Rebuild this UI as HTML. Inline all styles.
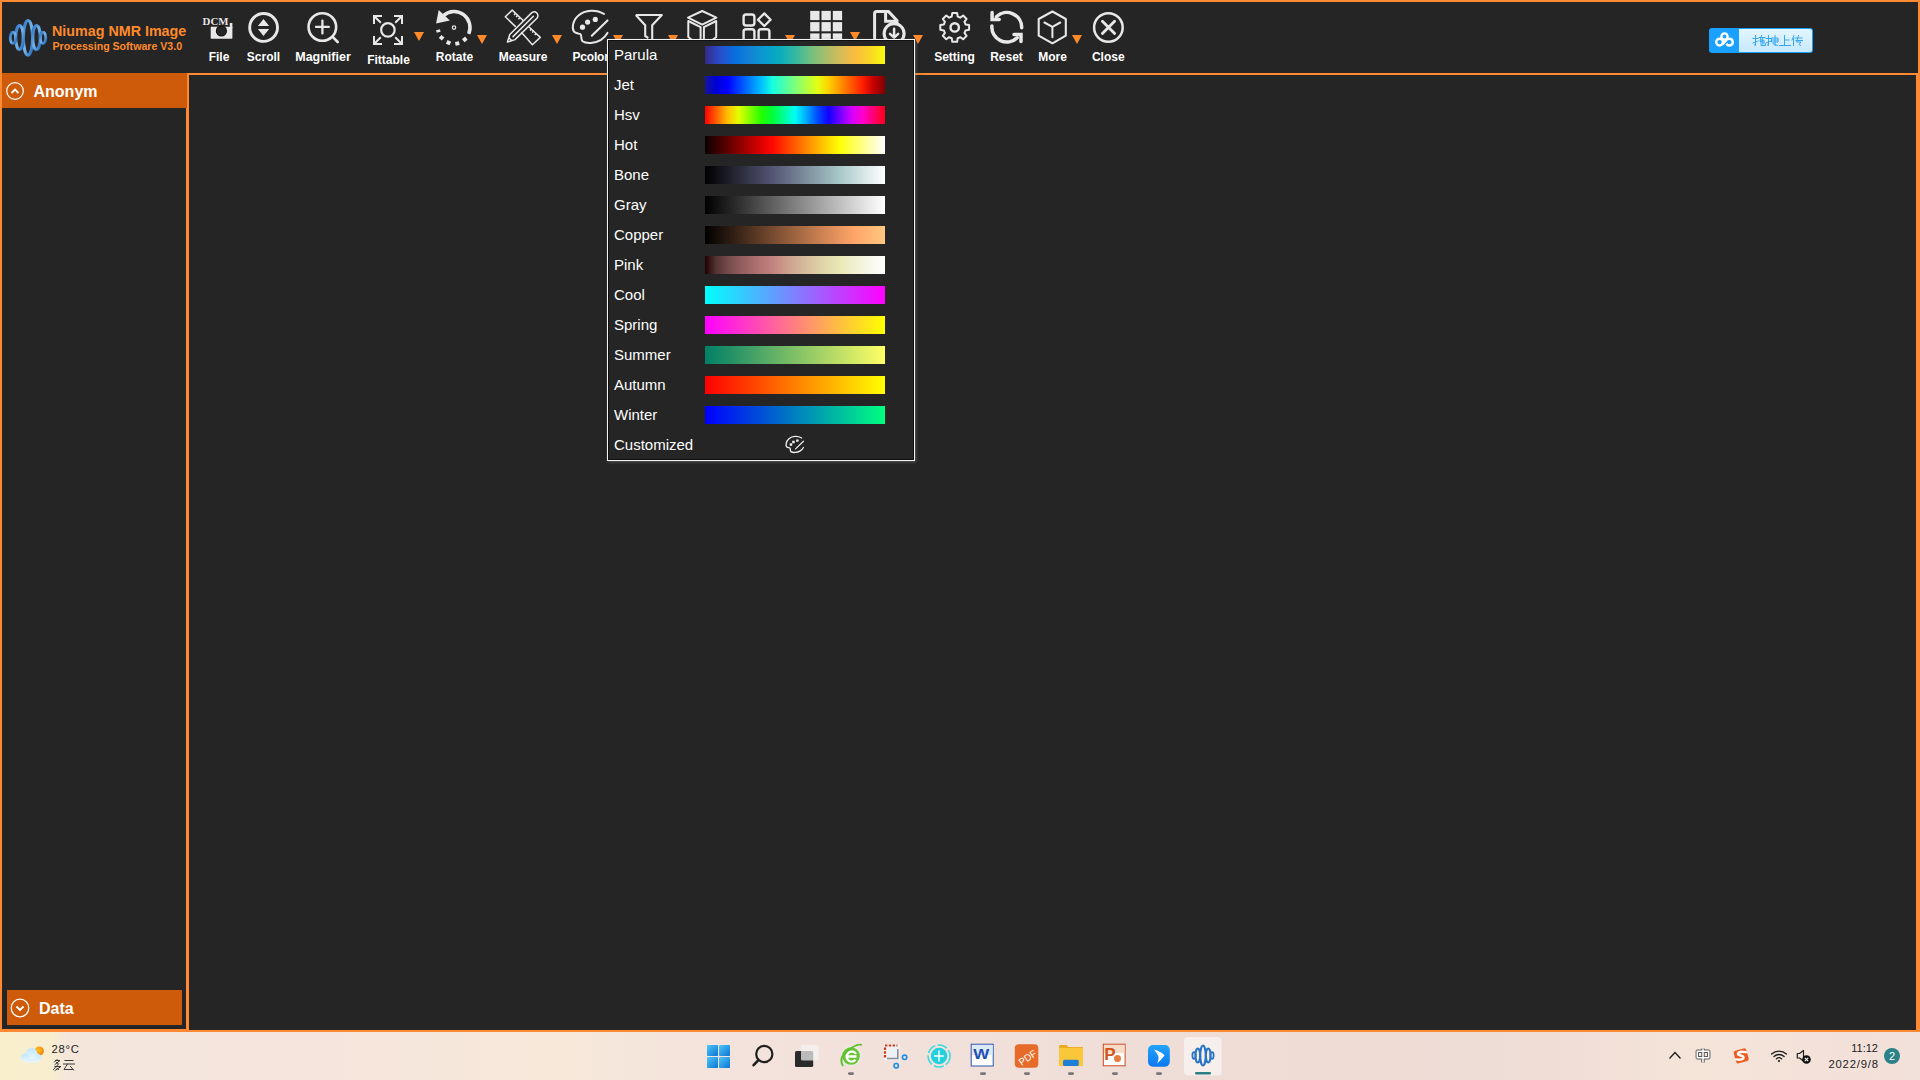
<!DOCTYPE html>
<html><head><meta charset="utf-8">
<style>
*{margin:0;padding:0;box-sizing:border-box}
html,body{width:1920px;height:1080px;overflow:hidden;background:#252525;font-family:"Liberation Sans",sans-serif}
.a{position:absolute}
.or{background:#ff8a33}
.lbl{position:absolute;color:#fff;font-weight:bold;font-size:12px;line-height:14px;white-space:nowrap;transform:translateX(-50%)}
.tri{position:absolute;width:0;height:0;border-left:5px solid transparent;border-right:5px solid transparent;border-top:9px solid #ff8a2a}
.mi{position:absolute;left:614px;color:#fff;font-size:15px;line-height:17px;white-space:nowrap}
.bar{position:absolute;left:705px;width:180px;height:18px}
.cm-parula{background:linear-gradient(to right,#352a87,#294dca,#066fdf,#1484d4,#079ccf,#0badbc,#33b8a1,#6ebf82,#a5be6b,#d3bb58,#fbbc41,#f8d727,#f9fb0e)}
.cm-jet{background:linear-gradient(to right,#16169c,#0000d8,#0000ff,#0040ff,#0080ff,#00c0ff,#16ffe1,#49ffad,#7dff7a,#b1ff46,#e4ff13,#ffd000,#ff9400,#ff5900,#ff1e00,#c40000,#800000)}
.cm-hsv{background:linear-gradient(to right,#ff0000,#ff5f00,#ffbd00,#e2ff00,#84ff00,#25ff00,#00ff39,#00ff97,#00fff6,#00aaff,#004bff,#1300ff,#7200ff,#d000ff,#ff00cf,#ff0071,#ff0018)}
.cm-hot{background:linear-gradient(to right,#0b0000,#350000,#5f0000,#890000,#b30000,#dd0000,#ff0800,#ff3200,#ff5c00,#ff8600,#ffb000,#ffda00,#ffff07,#ffff46,#ffff85,#ffffc4,#ffffff)}
.cm-bone{background:linear-gradient(to right,#000000,#0e0e13,#1c1c27,#2a2a3a,#38384e,#464661,#545574,#626882,#707b90,#7e8f9e,#8ca2ac,#9ab5ba,#a9c8c8,#bfd6d6,#d5e4e4,#eaf2f2,#ffffff)}
.cm-gray{background:linear-gradient(to right,#000000,#2a2a2a,#555555,#808080,#aaaaaa,#d5d5d5,#ffffff)}
.cm-copper{background:linear-gradient(to right,#000000,#342115,#69422a,#9e6440,#d28555,#ffa66a,#ffc77f)}
.cm-pink{background:linear-gradient(to right,#1e0000,#553434,#744a4a,#8d5a5a,#a16868,#b47575,#c38280,#ca988a,#d0ac94,#d7bd9c,#ddcda5,#e3dcad,#e9e9b6,#efefcb,#f4f4de,#fafaf0,#ffffff)}
.cm-cool{background:linear-gradient(to right,#00ffff,#2ad5ff,#55aaff,#807fff,#aa55ff,#d52aff,#ff00ff)}
.cm-spring{background:linear-gradient(to right,#ff00ff,#ff2ad5,#ff55aa,#ff807f,#ffaa55,#ffd52a,#ffff00)}
.cm-summer{background:linear-gradient(to right,#008066,#2a9466,#55aa66,#80c066,#aad466,#d5ea66,#ffff66)}
.cm-autumn{background:linear-gradient(to right,#ff0000,#ff2a00,#ff5500,#ff8000,#ffaa00,#ffd500,#ffff00)}
.cm-winter{background:linear-gradient(to right,#0000ff,#002aea,#0055d4,#0080bf,#00aaaa,#00d594,#00ff80)}
</style></head><body>
<!-- window frame -->
<div class="a" style="left:0;top:0;width:1920px;height:1032px;background:#ff8a33"></div>
<div class="a" style="left:2px;top:2px;width:1916px;height:71px;background:#252525"></div>
<div class="a" style="left:2px;top:73px;width:184px;height:956px;background:#252525"></div>
<div class="a" style="left:189px;top:75px;width:1727px;height:955px;background:#252525"></div>
<!-- toolbar icons -->
<svg class="a" style="left:0;top:0" width="1200" height="75" viewBox="0 0 1200 75">
 <defs>
  <linearGradient id="lg1" x1="0" y1="0" x2="1" y2="1"><stop offset="0" stop-color="#2a72c8"/><stop offset="0.5" stop-color="#74b2e8"/><stop offset="1" stop-color="#2068bc"/></linearGradient>
 </defs>
 <!-- logo -->
 <g fill="none" stroke="url(#lg1)">
  <ellipse cx="28" cy="37.8" rx="4.7" ry="17.3" stroke-width="3.2"/>
  <ellipse cx="19.5" cy="37.5" rx="3.9" ry="11.9" stroke-width="3.2"/>
  <ellipse cx="36.5" cy="37.5" rx="3.9" ry="11.9" stroke-width="3.2"/>
  <ellipse cx="13" cy="37.8" rx="2.8" ry="5.6" stroke-width="2.8"/>
  <ellipse cx="43" cy="37.8" rx="2.8" ry="5.6" stroke-width="2.8"/>
 </g>
 <g fill="#e8e8e8" stroke="none">
  <!-- File: camera -->
  <rect x="210.7" y="26.7" width="21.7" height="12.1" rx="0.8"/>
  <rect x="229.8" y="23" width="2.6" height="5"/>
  <circle cx="221.4" cy="31" r="5.6" fill="#111"/>
  <circle cx="221.4" cy="31" r="4.6" fill="#252525"/>
 </g>
 <text x="202.6" y="25" font-family="Liberation Serif" font-weight="bold" font-size="10.8" fill="#e8e8e8" stroke="#111" stroke-width="0.6" paint-order="stroke" textLength="26" lengthAdjust="spacingAndGlyphs">DCM</text>
 <g fill="none" stroke="#e8e8e8" stroke-linecap="round" stroke-linejoin="round">
  <!-- Scroll -->
  <circle cx="263.6" cy="27.45" r="13.9" stroke-width="2.9"/>
  <!-- Magnifier -->
  <circle cx="322.35" cy="27" r="13.8" stroke-width="2.6"/>
  <path d="M322.4,20.6V33.4M316,26.9H328.8" stroke-width="2.3"/>
  <path d="M332.9,37.1L337.7,42" stroke-width="2.6"/>
  <!-- Fittable -->
  <circle cx="387.9" cy="29.9" r="6.75" stroke-width="2.2"/>
  <path d="M374,24V16H382M374,16L380.8,22.8 M402,24V16H394M402,16L395.2,22.8 M374,36V44H382M374,44L380.8,37.2 M402,36V44H394M402,44L395.2,37.2" stroke-width="2" stroke-linecap="butt" stroke-linejoin="miter"/>
  <!-- Rotate arc -->
  <path d="M443.7,15.3 A16,16 0 0 1 468.7,33.9" stroke-width="3.5" stroke-linecap="butt"/>
  <circle cx="454" cy="27.6" r="1.7" stroke-width="1.2"/>
  <!-- Measure -->
  <g stroke-width="1.5">
   <path d="M523.2,20.5 L512.2,10.1 L505.3,16.8 L515.3,26.4"/>
   <path d="M529.3,27.2 L540.3,37.4 L532.4,44.7 L521.6,32.5"/>
   <path d="M515.57,13.37 l-1.53,1.58 M517.65,15.39 l-1.53,1.58 M519.94,17.62 l-1.53,1.58 M531.56,28.89 l-1.53,1.58 M533.71,30.98 l-1.53,1.58 M536.22,33.42 l-1.53,1.58" stroke-linecap="butt"/>
   <path d="M509.8,34.5 L531.6,12.9 Q534.5,10.6 536.8,13 Q539,15.6 536.9,18.2 L515,39.6 L507.4,42.1 Z"/>
   <path d="M513,36.6 L533.4,16.2"/>
   <path d="M509.3,38.3 L511.4,40.4"/>
  </g>
  <!-- Palette -->
  <path d="M603.9,13.9 C597,9.5 585,9.3 578.5,15.5 C572,21 572,29 574,31.6 C575.5,33.5 578.5,33.2 580.5,34.2 C582,35.5 580.5,39.5 582.5,41.3 C586,43.8 595,43.6 601,39.8 C604,37.8 606,35.5 607.5,32.9" stroke-width="2"/>
  <path d="M591.8,35.7 L607.5,20.4" stroke-width="2.1"/>
  <!-- Filter -->
  <path d="M635.8,15 H661.8 L652.2,25.3 V40 M635.8,15 L645.2,25.3 V36 L648.3,38" stroke-width="2.1" stroke-linecap="butt"/>
  <!-- Cube -->
  <path d="M702.2,11 L716.4,17.6 L702.2,24.6 L688,17.6 Z" stroke-width="2" stroke-linejoin="round"/>
  <path d="M688.3,21 V37 L692,40 M688.3,21 L700.6,27.2 V40" stroke-width="2"/>
  <path d="M716.2,21 V37 L712.5,40 M716.2,21 L703.9,27.2 V40" stroke-width="2"/>
  <!-- Apps -->
  <rect x="743.6" y="14.5" width="10.8" height="11" rx="2.5" stroke-width="2.4"/>
  <path d="M764.3,13.4 L770.6,19.7 L764.3,26 L758,19.7 Z" stroke-width="2.3"/>
  <path d="M743.6,41 V31.5 Q743.6,29.2 746,29.2 H752 Q754.4,29.2 754.4,31.5 V41" stroke-width="2.4"/>
  <path d="M758.6,41 V31.5 Q758.6,29.2 761,29.2 H767 Q769.4,29.2 769.4,31.5 V41" stroke-width="2.4"/>
  <!-- Export -->
  <path d="M874.6,40 V13.6 Q874.6,11.6 876.6,11.6 H888.6 L897,20.5 V22.5" stroke-width="3"/>
  <path d="M885.6,12.5 V21.2 H896" stroke-width="3" stroke-linejoin="miter"/>
  <circle cx="894.1" cy="33.6" r="10" stroke-width="3.1"/>
  <path d="M894.1,28.8V37.4 M890,33.8 L894.1,37.6 L898.2,33.8" stroke-width="2.5"/>
  <!-- Gear -->
  <path d="M950.41,17.05 L951.71,16.61 L952.29,13.00 L957.11,13.00 L957.69,16.61 L958.99,17.05 L960.22,17.65 L963.18,15.51 L966.59,18.92 L964.45,21.88 L965.05,23.11 L965.49,24.41 L969.10,24.99 L969.10,29.81 L965.49,30.39 L965.05,31.69 L964.45,32.92 L966.59,35.88 L963.18,39.29 L960.22,37.15 L958.99,37.75 L957.69,38.19 L957.11,41.80 L952.29,41.80 L951.71,38.19 L950.41,37.75 L949.18,37.15 L946.22,39.29 L942.81,35.88 L944.95,32.92 L944.35,31.69 L943.91,30.39 L940.30,29.81 L940.30,24.99 L943.91,24.41 L944.35,23.11 L944.95,21.88 L942.81,18.92 L946.22,15.51 L949.18,17.65Z" stroke-width="2"/>
  <circle cx="954.7" cy="27.4" r="4.2" stroke-width="2.4"/>
  <!-- Reset -->
  <path d="M996.5,16.7 A14.9,14.9 0 0 1 1021.7,27.8" stroke-width="3.5"/>
  <path d="M992.1,12.6 V19.4 H999.2" stroke-width="3.5" stroke-linecap="round" stroke-linejoin="miter"/>
  <path d="M991.9,26 A14.9,14.9 0 0 0 1017.2,37.8" stroke-width="3.5"/>
  <path d="M1014,34.5 H1021 V41.5" stroke-width="3.5" stroke-linecap="round" stroke-linejoin="miter"/>
  <!-- More hexagon -->
  <path d="M1052.4,11.5 L1065.8,19 V35.7 L1052.4,43.3 L1038.7,35.7 V19 Z" stroke-width="2.1"/>
  <path d="M1044.4,22.5 L1052.4,26.8 L1060.3,22.5 M1052.4,26.8 V37.2" stroke-width="2"/>
  <!-- Close -->
  <circle cx="1108.4" cy="27.45" r="14.3" stroke-width="2.5"/>
  <path d="M1102.4,21.2 L1114.6,33.6 M1114.6,21.2 L1102.4,33.6" stroke-width="2.8"/>
 </g>
 <g fill="#e8e8e8">
  <!-- scroll triangles -->
  <path d="M263.5,18.9 L269.2,26 H257.9Z M257.9,28.9 H269.2 L263.5,36Z"/>
  <!-- rotate arrowhead -->
  <path d="M436.1,23.6 L438.7,9.9 L449.9,20.5Z"/>
  <!-- rotate dashes -->
  <rect x="436.3" y="29.8" width="4" height="2.6" transform="rotate(-15 438.3 31)"/>
  <rect x="439.6" y="35.8" width="4" height="4" transform="rotate(40 441.6 37.8)"/>
  <rect x="446.5" y="40.7" width="4" height="4" transform="rotate(25 448.5 42.7)"/>
  <rect x="455.3" y="41.5" width="4" height="4" transform="rotate(-10 457.3 43.5)"/>
  <rect x="462.8" y="37.4" width="4" height="4" transform="rotate(-40 464.8 39.4)"/>
  <!-- palette dots -->
  <circle cx="582.5" cy="27.2" r="2.6"/><circle cx="587.6" cy="22.1" r="2.6"/><circle cx="595.3" cy="19.4" r="2.6"/>
  <!-- grid -->
  <rect x="810.2" y="10.9" width="9.3" height="9.2"/><rect x="821.5" y="10.9" width="9.3" height="9.2"/><rect x="832.8" y="10.9" width="9.3" height="9.2"/>
  <rect x="810.2" y="22.1" width="9.3" height="9.2"/><rect x="821.5" y="22.1" width="9.3" height="9.2"/><rect x="832.8" y="22.1" width="9.3" height="9.2"/>
  <rect x="810.2" y="33.4" width="9.3" height="7"/><rect x="821.5" y="33.4" width="9.3" height="7"/><rect x="832.8" y="33.4" width="9.3" height="7"/>
 </g>
</svg>
<div class="a" style="left:52px;top:23px;color:#ff8a2a;font-weight:bold;font-size:14.3px;line-height:17px;white-space:nowrap">Niumag NMR Image</div>
<div class="a" style="left:52.5px;top:40px;color:#ff8a2a;font-weight:bold;font-size:10.6px;line-height:13px;white-space:nowrap">Processing Software V3.0</div>

<!-- labels -->
<div class="lbl" style="left:219px;top:50px">File</div>
<div class="lbl" style="left:263.5px;top:50px">Scroll</div>
<div class="lbl" style="left:323px;top:50px;font-size:12.5px">Magnifier</div>
<div class="lbl" style="left:388.5px;top:53px">Fittable</div>
<div class="lbl" style="left:454.5px;top:50px">Rotate</div>
<div class="lbl" style="left:523px;top:50px">Measure</div>
<div class="a" style="left:572.5px;top:50px;color:#fff;font-weight:bold;font-size:12px;line-height:14px;letter-spacing:-0.2px;white-space:nowrap">Pcolor</div>
<div class="lbl" style="left:954.5px;top:50px">Setting</div>
<div class="lbl" style="left:1006.5px;top:50px">Reset</div>
<div class="lbl" style="left:1052.5px;top:50px">More</div>
<div class="lbl" style="left:1108.3px;top:50px">Close</div>

<!-- triangles -->
<div class="tri" style="left:414px;top:32px"></div>
<div class="tri" style="left:477px;top:35px"></div>
<div class="tri" style="left:552px;top:35px"></div>
<div class="tri" style="left:613px;top:35px"></div>
<div class="tri" style="left:668px;top:35px"></div>
<div class="tri" style="left:785px;top:35px"></div>
<div class="tri" style="left:850px;top:32px"></div>
<div class="tri" style="left:913px;top:35px"></div>
<div class="tri" style="left:1072px;top:35px"></div>

<!-- left panel -->
<div class="a" style="left:2px;top:73px;width:185px;height:35px;background:#ce5b0a"></div>
<svg class="a" style="left:0;top:73px" width="30" height="36">
 <circle cx="15" cy="18" r="8.3" fill="none" stroke="#fff" stroke-width="1.2"/>
 <polyline points="11.5,20 15,16.5 18.5,20" fill="none" stroke="#fff" stroke-width="1.8"/>
</svg>
<div class="a" style="left:33.5px;top:82px;color:#fff;font-weight:bold;font-size:16px;line-height:19px">Anonym</div>

<div class="a" style="left:7px;top:990px;width:175px;height:35px;background:#ce5b0a"></div>
<svg class="a" style="left:5px;top:990px" width="30" height="36">
 <circle cx="15" cy="18" r="8.8" fill="none" stroke="#fff" stroke-width="1.2"/>
 <polyline points="11.5,16.5 15,20 18.5,16.5" fill="none" stroke="#fff" stroke-width="1.8"/>
</svg>
<div class="a" style="left:39px;top:999px;color:#fff;font-weight:bold;font-size:16px;line-height:19px">Data</div>

<!-- menu -->
<div class="a" style="left:607px;top:39px;width:308px;height:422px;background:#252525;border:1px solid #f4f4f4;box-shadow:1px 1px 3px 0 rgba(120,120,120,0.6)">
 <div class="a" style="left:0;top:0;right:0;bottom:0;border:1px solid #101010"></div>
</div>
<div class="mi" style="top:46px">Parula</div><div class="bar cm-parula" style="top:46px"></div>
<div class="mi" style="top:76px">Jet</div><div class="bar cm-jet" style="top:76px"></div>
<div class="mi" style="top:106px">Hsv</div><div class="bar cm-hsv" style="top:106px"></div>
<div class="mi" style="top:136px">Hot</div><div class="bar cm-hot" style="top:136px"></div>
<div class="mi" style="top:166px">Bone</div><div class="bar cm-bone" style="top:166px"></div>
<div class="mi" style="top:196px">Gray</div><div class="bar cm-gray" style="top:196px"></div>
<div class="mi" style="top:226px">Copper</div><div class="bar cm-copper" style="top:226px"></div>
<div class="mi" style="top:256px">Pink</div><div class="bar cm-pink" style="top:256px"></div>
<div class="mi" style="top:286px">Cool</div><div class="bar cm-cool" style="top:286px"></div>
<div class="mi" style="top:316px">Spring</div><div class="bar cm-spring" style="top:316px"></div>
<div class="mi" style="top:346px">Summer</div><div class="bar cm-summer" style="top:346px"></div>
<div class="mi" style="top:376px">Autumn</div><div class="bar cm-autumn" style="top:376px"></div>
<div class="mi" style="top:406px">Winter</div><div class="bar cm-winter" style="top:406px"></div>
<div class="mi" style="top:436px">Customized</div>

<!-- customized palette icon -->
<svg class="a" style="left:0;top:0;overflow:visible" width="1" height="1">
 <g transform="translate(499.7 431) scale(0.5)" fill="none" stroke="#f0f0f0" stroke-linecap="round" stroke-linejoin="round">
  <path d="M603.9,13.9 C597,9.5 585,9.3 578.5,15.5 C572,21 572,29 574,31.6 C575.5,33.5 578.5,33.2 580.5,34.2 C582,35.5 580.5,39.5 582.5,41.3 C586,43.8 595,43.6 601,39.8 C604,37.8 606,35.5 607.5,32.9" stroke-width="2.6"/>
  <path d="M591.8,35.7 L607.5,20.4" stroke-width="2.4"/>
  <g fill="#f4f4f4" stroke="none"><rect x="580" y="24.6" width="5" height="5"/><rect x="585" y="19.5" width="5" height="5"/><rect x="592.8" y="17" width="5" height="4.4"/></g>
 </g>
</svg>
<!-- baidu upload button -->
<div class="a" style="left:1709px;top:28px;width:104px;height:25px;border-radius:3px;background:#1aa0ff"></div>
<div class="a" style="left:1739px;top:29px;width:73px;height:23px;border-radius:0 2px 2px 0;background:linear-gradient(#e2f6ff,#c9e9fc)"></div>
<svg class="a" style="left:1705px;top:24px" width="40" height="32">
 <g fill="none" stroke="#fff" stroke-width="2.4">
  <circle cx="19.5" cy="12.5" r="3.1"/>
  <circle cx="14.6" cy="18.1" r="3.4"/>
  <path d="M21.5,19.6 A3.3,3.3 0 1 0 24.5,14.8 A3.3 3.3 0 0 0 21,16.5 L17.5,20.2"/>
 </g>
</svg>
<svg class="a" style="left:1751.5px;top:33px" width="54" height="16">
 <g fill="none" stroke="#36a6f3" stroke-width="1" stroke-linecap="square">
  <!-- 拖 -->
  <path d="M3.5,2.5V12.5L2.5,12M1,5.5H6M1,10L6,8"/>
  <path d="M7,4.5H13M9.5,2.5L8,8M9,6.5V12.5H13.5V11M8.5,8.5L12,7.5V10.5M10.7,5.5V11"/>
  <!-- 拽 -->
  <path d="M16.5,2.5V12.5L15.5,12M14,5.5H19M14,10L19,8"/>
  <path d="M20,5H26V9H20ZM20,7H26M23,2.5V12.5M21,10.5L25.5,12.5"/>
  <!-- 上 -->
  <path d="M32.5,2.5V12.5M32.5,7H37M27.5,12.5H38.5"/>
  <!-- 传 -->
  <path d="M42,2.5L40,7M41.5,5.5V12.5M43,5H50M44,7.5H50.5M46.5,2.5L44.5,9H49L47,11.5L48.5,12.5"/>
 </g>
</svg>

<!-- taskbar -->
<div class="a" style="left:0;top:1032px;width:1920px;height:48px;background:linear-gradient(to right,#f8efcd 0px,#f8eecf 50px,#f5e6dc 68px,#f5e5dc 300px,#f7e8da 560px,#f3e3dc 720px,#f0e0d9 1000px,#eedcd5 1300px,#eedcd6 1500px,#f5e4d8 1700px,#f2e0da 1920px)"></div>
<svg class="a" style="left:0;top:1032px" width="1920" height="48" viewBox="0 1032 1920 48">
 <defs>
  <linearGradient id="wcl" x1="0" y1="0" x2="0" y2="1"><stop offset="0" stop-color="#bfe6fb"/><stop offset="1" stop-color="#e8f6fd"/></linearGradient>
  <radialGradient id="sun" cx="0.4" cy="0.4" r="0.7"><stop offset="0" stop-color="#ffc21a"/><stop offset="1" stop-color="#f07a10"/></radialGradient>
  <linearGradient id="win" x1="0" y1="0" x2="1" y2="1"><stop offset="0" stop-color="#4fc8f8"/><stop offset="1" stop-color="#0b73d3"/></linearGradient>
  <linearGradient id="bapp" x1="0" y1="0" x2="0" y2="1"><stop offset="0" stop-color="#22a4fb"/><stop offset="1" stop-color="#0b78f0"/></linearGradient>
 </defs>
 <!-- weather -->
 <circle cx="39.3" cy="1051" r="4.6" fill="url(#sun)"/>
 <g fill="url(#wcl)">
  <ellipse cx="32" cy="1057.5" rx="9.5" ry="5.3"/>
  <circle cx="31.5" cy="1053.5" r="5.8"/>
  <circle cx="25" cy="1057.5" r="4"/>
 </g>
 <!-- 多云 -->
 <g fill="none" stroke="#3a3a3a" stroke-width="1" stroke-linecap="square">
  <path d="M57,1059.5L54.5,1062M55.5,1060.5H60L55,1064.5M56.5,1062.5L58,1063.5M58.5,1064L53.5,1069.5M55,1066.5H61L55,1070.5M57,1068.5L58.5,1069.5"/>
  <path d="M65,1060.5H73M63.5,1064H74.5M67.5,1064L64,1069.5H73M70.5,1066.5L73.5,1070"/>
 </g>
 <!-- windows -->
 <g fill="url(#win)">
  <rect x="707" y="1045" width="11" height="11" rx="0.8"/><rect x="719" y="1045" width="11" height="11" rx="0.8"/>
  <rect x="707" y="1057" width="11" height="11" rx="0.8"/><rect x="719" y="1057" width="11" height="11" rx="0.8"/>
 </g>
 <!-- search -->
 <circle cx="764.3" cy="1054" r="8.1" fill="none" stroke="#1e1e1e" stroke-width="2.2"/>
 <path d="M758.4,1060.1 L753.6,1065.2" stroke="#1e1e1e" stroke-width="2.6" stroke-linecap="round"/>
 <!-- task view -->
 <rect x="795" y="1051" width="18.2" height="16" rx="1.5" fill="#2a2a2a"/>
 <rect x="801" y="1045" width="17.7" height="15.4" rx="1.5" fill="#f4f4f4" opacity="0.72"/>
 <!-- green ie -->
 <circle cx="851" cy="1056" r="10.2" fill="#e6efe0"/>
 <circle cx="851" cy="1056" r="8.8" fill="#6cc33a"/>
 <path d="M845.5,1056.5 H856.5 M856,1054 A5,5 0 1 0 855.5,1059.8" fill="none" stroke="#fff" stroke-width="2.3"/>
 <path d="M843,1066 Q838,1058 848,1050 Q858,1043 862,1045" fill="none" stroke="#5fbf2e" stroke-width="1.8"/>
 <!-- snip -->
 <rect x="883.5" y="1044" width="16.5" height="16.5" rx="1" fill="#eef1f3"/>
 <path d="M885,1047.5V1058 M885,1045.5H897.5" fill="none" stroke="#d43b10" stroke-width="2.2" stroke-dasharray="2.4 1.4"/>
 <path d="M897.8,1049 V1058.5 H887" fill="none" stroke="#8a8f98" stroke-width="1.6"/>
 <circle cx="904.6" cy="1057.3" r="2.2" fill="none" stroke="#1b8fe6" stroke-width="1.6"/>
 <circle cx="896.2" cy="1065.7" r="2.2" fill="none" stroke="#1b8fe6" stroke-width="1.6"/>
 <!-- teal circle -->
 <circle cx="939.1" cy="1056" r="11" fill="none" stroke="#3fdcdc" stroke-width="1.6" stroke-dasharray="10 2.5"/>
 <circle cx="939.1" cy="1056" r="8.2" fill="#22d0e0"/>
 <path d="M939,1051 V1061 M934.5,1056 H943.5" stroke="#fff" stroke-width="1.4" stroke-linecap="round"/>
 <!-- word -->
 <rect x="971.2" y="1044.2" width="22" height="21.8" fill="#fff" stroke="#2a55b0" stroke-width="1"/>
 <rect x="972" y="1045" width="20.5" height="10" fill="#dceaf8"/>
 <text x="973.2" y="1058.5" font-family="Liberation Sans" font-weight="bold" font-size="15" fill="#1f4fb0" textLength="16" lengthAdjust="spacingAndGlyphs">W</text>
 <!-- pdf -->
 <rect x="1014.8" y="1044.2" width="23.5" height="23.5" rx="4" fill="#e66a28"/>
 <text x="1017" y="1061.5" font-family="Liberation Sans" font-size="10" fill="#fff" transform="rotate(-35 1026.5 1056)" textLength="19" lengthAdjust="spacingAndGlyphs">PDF</text>
 <!-- folder -->
 <path d="M1059,1048 V1046.5 Q1059,1045 1060.5,1045 H1066.5 L1068.5,1047 H1083 V1048 Z" fill="#e7a81e"/>
 <rect x="1059" y="1047.8" width="24" height="18.3" fill="#fbc73a"/>
 <rect x="1063" y="1059.8" width="15.8" height="6.3" rx="1.5" fill="#1f7fd6"/>
 <!-- ppt -->
 <rect x="1103.3" y="1044.2" width="21.8" height="21.6" fill="#fff" stroke="#c9481c" stroke-width="1"/>
 <rect x="1104" y="1045" width="20.4" height="8" fill="#f9dcc8"/>
 <text x="1104.3" y="1059.5" font-family="Liberation Sans" font-weight="bold" font-size="17" fill="#d2541c">P</text>
 <circle cx="1117.5" cy="1058.5" r="3.5" fill="#e87a3c"/>
 <!-- blue app -->
 <rect x="1148" y="1045" width="21.8" height="21.8" rx="5" fill="url(#bapp)"/>
 <path d="M1154,1049.5 Q1162,1052 1164.5,1055.5 Q1161,1060 1157,1063.5 Q1159.5,1058 1158,1055.5 Q1156.5,1052.5 1154,1049.5Z" fill="#fff"/>
 <!-- active niumag -->
 <rect x="1184" y="1037" width="37.6" height="38.5" rx="4" fill="#f6efeb"/>
 <g fill="none" stroke="#2a74c4">
  <ellipse cx="1203" cy="1055.5" rx="2.7" ry="10" stroke-width="2"/>
  <ellipse cx="1197.8" cy="1055.5" rx="2.3" ry="7" stroke-width="2"/>
  <ellipse cx="1208.2" cy="1055.5" rx="2.3" ry="7" stroke-width="2"/>
  <ellipse cx="1194" cy="1055.5" rx="1.6" ry="3.3" stroke-width="1.8"/>
  <ellipse cx="1212" cy="1055.5" rx="1.6" ry="3.3" stroke-width="1.8"/>
 </g>
 <rect x="1195" y="1072" width="16" height="2.6" rx="1.3" fill="#2b7f84"/>
 <!-- indicators -->
 <g fill="#777">
  <rect x="848" y="1072.3" width="6" height="2.6" rx="1.3"/>
  <rect x="980" y="1072.3" width="6" height="2.6" rx="1.3"/>
  <rect x="1024" y="1072.3" width="6" height="2.6" rx="1.3"/>
  <rect x="1068" y="1072.3" width="6" height="2.6" rx="1.3"/>
  <rect x="1112" y="1072.3" width="6" height="2.6" rx="1.3"/>
  <rect x="1156" y="1072.3" width="6" height="2.6" rx="1.3"/>
 </g>
 <!-- tray -->
 <path d="M1669.5,1058.5 L1675,1052.5 L1680.5,1058.5" fill="none" stroke="#1e1e1e" stroke-width="1.3"/>
 <g fill="none" stroke="#5a5a5a" stroke-width="3.4" stroke-linejoin="round">
  <path d="M1697.3,1051.3H1708.7V1057.7H1697.3Z M1703,1048.6V1062.4"/>
 </g>
 <g fill="none" stroke="#fff" stroke-width="1.5">
  <path d="M1697.3,1051.3H1708.7V1057.7H1697.3Z M1703,1048.6V1062.4"/>
 </g>
 <rect x="1734.7" y="1049.4" width="13" height="13" rx="2.2" fill="#ef5a1e" transform="rotate(-16 1741.2 1055.9)"/>
 <path d="M1745.8,1052.2 Q1741.5,1051 1738.6,1052.6 Q1736.6,1054.3 1740,1055.3 Q1744.6,1056.2 1743.4,1058.4 Q1740.8,1060.6 1736.2,1059.4" fill="none" stroke="#fff" stroke-width="2.4" stroke-linecap="round"/>
 <!-- wifi -->
 <g fill="none" stroke="#1e1e1e" stroke-width="1.3" stroke-linecap="round">
  <path d="M1771.6,1054 A11,11 0 0 1 1786.4,1054"/>
  <path d="M1773.9,1056.5 A7.5,7.5 0 0 1 1784.1,1056.5"/>
  <path d="M1776.3,1058.9 A4,4 0 0 1 1781.7,1058.9"/>
 </g>
 <circle cx="1779" cy="1061" r="1.1" fill="#1e1e1e"/>
 <!-- speaker -->
 <path d="M1797.3,1053.5 H1799.5 L1803.5,1050.5 V1061 L1799.5,1058 H1797.3 Z" fill="none" stroke="#1e1e1e" stroke-width="1.2" stroke-linejoin="round"/>
 <circle cx="1806.5" cy="1059.5" r="4.3" fill="#111"/>
 <path d="M1804.8,1057.8 L1808.2,1061.2 M1808.2,1057.8 L1804.8,1061.2" stroke="#fff" stroke-width="1.1"/>
 <!-- badge -->
 <circle cx="1892" cy="1056" r="8" fill="#2c8087"/>
</svg>
<div class="a" style="left:1886px;top:1050px;width:12px;text-align:center;color:#fff;font-size:11px;line-height:13px">2</div>
<div class="a" style="left:51.5px;top:1043px;color:#222;font-size:11.3px;line-height:13px;letter-spacing:0.7px">28°C</div>
<div class="a" style="left:1800px;top:1042px;width:78px;text-align:right;color:#222;font-size:11px;line-height:13px">11:12</div>
<div class="a" style="left:1800px;top:1057.5px;width:78.8px;text-align:right;color:#222;font-size:11.3px;line-height:13px;letter-spacing:0.8px">2022/9/8</div>
</body></html>
